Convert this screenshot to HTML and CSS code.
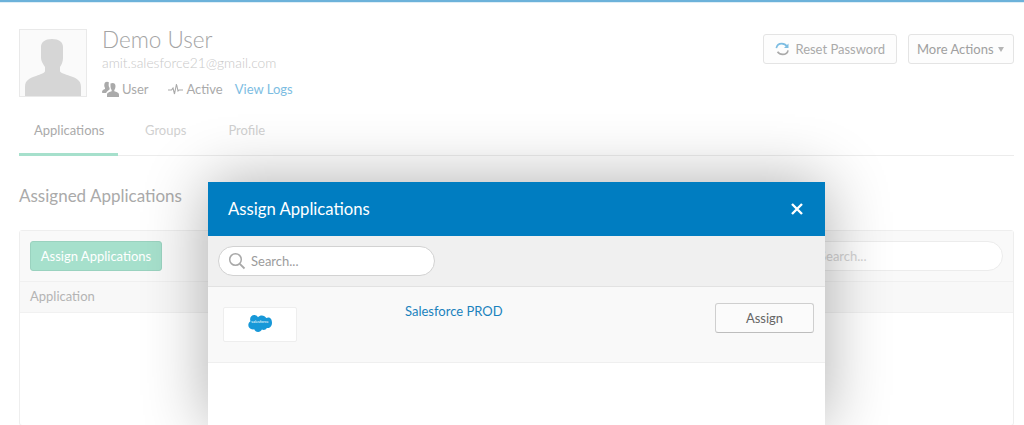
FILE: index.html
```html
<!DOCTYPE html>
<html lang="en">
<head>
    <meta charset="UTF-8">
    <title>Assign Applications</title>
    <link rel="stylesheet" href="styles.css">
</head>
<body>
    <div class="top-line"></div>
    <div class="page">
        <div class="profile">
            <div class="avatar">
                <svg width="66" height="66" viewBox="0 0 66 66"><path fill="#d6d6d6" d="M21 17c0-5 4-8 11-8s11 3 11 8v11c0 3-1 6-3 9v4c0 2 5 3 10 5 6 2 11 4 11 11v9H5v-9c0-7 5-9 11-11 5-2 9-3 9-5v-4c-2-3-4-6-4-9z"/></svg>
            </div>
            <div class="profile-info">
                <div class="name">Demo User</div>
                <div class="email">amit.salesforce21@gmail.com</div>
                <div class="meta">
                    <span class="meta-item">
                        <svg width="17" height="16" viewBox="0 0 17 16"><path fill="#aaa" d="M3 1.500c1-1 3-1 4 0-.6 1.500-.5 4 .6 5.500v1.500c-1.500 1-2.500 1.500-3.500 3.500H1c-.6 0-1-.4-1-1 0-1.500 1-2.500 3-3V7C2 5.500 2 3 3 1.500z"/><path fill="#aaa" d="M8.500 2.500c2.500-1.300 5-.5 5 2.500 0 1.500-.4 3-1.200 4v1.200c2 .6 4.700 1.300 4.700 3.500V16H5v-2.300c0-2.200 2.700-2.900 4.700-3.500V9C8.900 8 8.500 6.500 8.500 5z"/></svg>
                        User
                    </span>
                    <span class="meta-item status">
                        <svg width="15" height="12" viewBox="0 0 15 12"><path fill="none" stroke="#aaa" stroke-width="1.100" d="M0 7h3.500l1.500-2 1.500 6 2-10 1.500 7 1-1h4"/></svg>
                        Active
                    </span>
                    <a class="logs-link">View Logs</a>
                </div>
            </div>
            <div class="profile-actions">
                <button class="btn reset-btn">
                    <svg width="16" height="16" viewBox="0 0 16 16"><path fill="none" stroke="#7dbde2" stroke-width="1.800" d="M1.500 7C2 4 4.500 2 7.500 2c2.500 0 4.500 1.200 5.800 3.200"/><path fill="#7dbde2" d="M15 2v5h-5z"/><path fill="none" stroke="#aaa" stroke-width="1.800" d="M14.500 9.500C14 12.200 11.500 14 8.500 14 6 14 4 12.800 2.800 11"/></svg>
                    Reset Password
                </button>
                <button class="btn more-btn">More Actions <span class="caret"></span></button>
            </div>
        </div>

        <div class="tabs">
            <div class="tab active">Applications</div>
            <div class="tab">Groups</div>
            <div class="tab">Profile</div>
        </div>

        <h2 class="section-title">Assigned Applications</h2>

        <div class="panel">
            <div class="panel-toolbar">
                <button class="btn-green">Assign Applications</button>
                <div class="panel-search">Search...</div>
            </div>
            <div class="panel-head">Application</div>
        </div>
    </div>

    <div class="modal">
        <div class="modal-header">
            <span class="modal-title">Assign Applications</span>
            <svg class="modal-close" width="14" height="14" viewBox="0 0 14 14"><path stroke="#fff" stroke-width="2.400" d="M2 2l10 10M12 2L2 12"/></svg>
        </div>
        <div class="modal-search-bar">
            <div class="modal-search">
                <svg width="18" height="18" viewBox="0 0 18 18"><circle cx="7.500" cy="7.500" r="5.800" fill="none" stroke="#a8a8a8" stroke-width="1.500"/><path stroke="#a8a8a8" stroke-width="1.800" d="M11.800 11.800l4.700 4.700"/></svg>
                <span>Search...</span>
            </div>
        </div>
        <div class="app-row">
            <div class="app-logo">
                <svg width="24" height="17" viewBox="0 0 24 17">
                    <path fill="#1798d8" d="M10 2.200C11 1 12.300.4 13.800.4c2 0 3.600 1 4.400 2.600.7-.3 1.400-.5 2.100-.5 2.600 0 3.700 2.600 3.700 5.200s-1.400 5.300-4 5.300c-.4 0-.8 0-1.100-.1-.7 1.200-1.900 2-3.300 2-.6 0-1.200-.1-1.700-.4-.7 1.500-2.100 2.500-3.800 2.500-1.800 0-3.300-1.100-3.900-2.700-.3 0-.5.1-.8.1C2.200 14.600.3 12.600.3 10.100c0-1.700.9-3.100 2.200-3.900-.3-.6-.4-1.200-.4-1.900C2.100 2 4 .1 6.300.1c1.500 0 2.800.8 3.700 2.100z"/>
                </svg>
                <span class="app-logo-text">salesforce</span>
            </div>
            <a class="app-name">Salesforce PROD</a>
            <button class="assign-btn">Assign</button>
        </div>
    </div>
</body>
</html>
```

FILE: styles.css
```css
html, body {
    height: 425px;
    overflow: hidden;
}
body {
    margin: 0;
    font-family: 'Lato', 'Liberation Sans', sans-serif;
    background-color: #fff;
    color: #aaa;
    position: relative;
}
.top-line {
    height: 2px;
    background-color: #6cb2da;
    border-bottom: 1px solid #dfeef6;
}
.page {
    padding: 26px 10px 0 19px;
}
.profile {
    display: flex;
    height: 68px;
}
.avatar {
    width: 66px;
    height: 66px;
    border: 1px solid #e9e9e9;
    background-color: #fafafa;
    margin-right: 15px;
}
.avatar svg {
    display: block;
}
.profile-info {
    flex: 1;
    margin-top: -1px;
}
.name {
    font-size: 22.500px;
    font-weight: 300;
    line-height: 24px;
    color: #a4a4a4;
    margin-bottom: 2px;
}
.email {
    font-size: 13.800px;
    font-weight: 300;
    line-height: 17px;
    color: #c8c8c8;
    margin-bottom: 9px;
}
.meta {
    display: flex;
    align-items: center;
    font-size: 13px;
    line-height: 18px;
    color: #aaa;
}
.meta-item {
    display: flex;
    align-items: center;
    gap: 3px;
    margin-right: 20px;
}
.status {
    margin-right: 12px;
}
.logs-link {
    color: #7dbde2;
}
.profile-actions {
    display: flex;
    gap: 11px;
    margin-top: 5px;
}
.btn {
    height: 30px;
    box-sizing: border-box;
    border: 1px solid #e4e4e4;
    border-radius: 3px;
    background-color: #fdfdfd;
    font-family: inherit;
    font-size: 13px;
    color: #aaa;
    display: flex;
    align-items: center;
    white-space: nowrap;
    padding: 0 11px;
}
.reset-btn {
    width: 134px;
    gap: 6px;
}
.more-btn {
    width: 106px;
    padding: 0 8px;
    color: #a0a0a0;
    gap: 4px;
}
.caret {
    width: 0;
    height: 0;
    border-left: 3.500px solid transparent;
    border-right: 3.500px solid transparent;
    border-top: 5px solid #b5b5b5;
}
.tabs {
    display: flex;
    height: 59px;
    border-bottom: 1px solid #ececec;
    box-sizing: border-box;
    padding-top: 23px;
}
.tab {
    font-size: 13px;
    line-height: 20px;
    color: #d0d0d0;
    margin-right: 42px;
}
.tab.active {
    color: #aaa;
    width: 99px;
    margin-right: 27px;
    padding-left: 15px;
    box-sizing: border-box;
    height: 36px;
    border-bottom: 3px solid #a6e0cc;
}
.section-title {
    font-size: 17px;
    line-height: 22px;
    font-weight: 400;
    color: #aaa;
    margin: 29px 0 23px;
}
.panel {
    border: 1px solid #eee;
    border-radius: 3px;
    height: 194px;
}
.panel-toolbar {
    height: 50px;
    background-color: #f9f9f9;
    border-bottom: 1px solid #f0f0f0;
    display: flex;
    justify-content: space-between;
    align-items: center;
    padding: 0 10px;
}
.btn-green {
    width: 132px;
    height: 30px;
    box-sizing: border-box;
    background-color: #a6e0cc;
    border: 1px solid #9ad2bf;
    border-radius: 3px;
    color: #fff;
    font-family: inherit;
    font-size: 13px;
    padding: 0;
}
.panel-search {
    width: 260px;
    height: 30px;
    box-sizing: border-box;
    background-color: #fff;
    border: 1px solid #ececec;
    border-radius: 15px;
    color: #d4d4d4;
    font-size: 13px;
    line-height: 28px;
    padding-left: 75px;
}
.panel-head {
    height: 30px;
    background-color: #f8f8f8;
    border-bottom: 1px solid #f1f1f1;
    font-size: 13px;
    line-height: 29px;
    padding-left: 10px;
    color: #b4b4b4;
}
.modal {
    position: absolute;
    left: 208px;
    top: 182px;
    width: 617px;
    height: 243px;
    background-color: #fff;
    box-shadow: 0 0 60px rgba(0, 0, 0, 0.32);
}
.modal-header {
    height: 54px;
    background-color: #007dc1;
    color: #fff;
    display: flex;
    align-items: center;
    justify-content: space-between;
    padding: 0 21px 0 20px;
}
.modal-title {
    font-size: 16.700px;
}
.modal-search-bar {
    height: 30px;
    background-color: #f0f0f0;
    border-bottom: 1px solid #e2e2e2;
    padding: 10px;
}
.modal-search {
    width: 217px;
    height: 30px;
    box-sizing: border-box;
    background-color: #fff;
    border: 1px solid #d2d2d2;
    border-radius: 15px;
    display: flex;
    align-items: center;
    gap: 5px;
    padding-left: 9px;
    font-size: 13px;
    color: #9c9c9c;
}
.app-row {
    height: 76px;
    box-sizing: border-box;
    background-color: #f9f9f9;
    border-bottom: 1px solid #efefef;
    display: flex;
    align-items: flex-start;
    padding: 16px 11px 0 15px;
}
.app-logo {
    width: 74px;
    height: 35px;
    margin-top: 4px;
    padding-bottom: 3px;
    box-sizing: border-box;
    background-color: #fff;
    border: 1px solid #eee;
    border-radius: 2px;
    display: flex;
    align-items: center;
    justify-content: center;
    position: relative;
}
.app-logo-text {
    position: absolute;
    left: 0;
    right: 0;
    top: 9px;
    text-align: center;
    font-size: 4px;
    line-height: 10px;
    color: #fff;
}
.app-name {
    color: #1a82bd;
    font-size: 13px;
    line-height: 16px;
    margin-left: 108px;
    flex: 1;
}
.assign-btn {
    width: 99px;
    height: 30px;
    box-sizing: border-box;
    background-color: #fbfbfb;
    border: 1px solid #cfcfcf;
    border-bottom-color: #bdbdbd;
    border-radius: 3px;
    font-family: inherit;
    font-size: 13px;
    color: #666;
}
```
